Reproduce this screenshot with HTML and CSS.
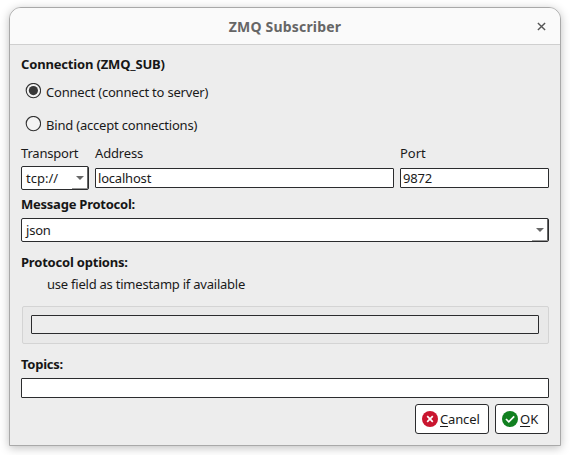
FILE: index.html
```html
<!DOCTYPE html>
<html lang="en">
<head>
<meta charset="utf-8">
<title>ZMQ Subscriber</title>
<link rel="stylesheet" href="styles.css">
</head>
<body>
<main class="window">
  <header class="titlebar">
    <h1><span class="t title">ZMQ Subscriber</span></h1>
    <svg class="close" width="9" height="9" viewBox="0 0 9 9"><path d="M.9.9l7.2 7.2M8.1.9L.9 8.1" stroke="#555" stroke-width="1.4"/></svg>
  </header>
  <form class="content">
    <div class="heading h-connection"><span class="t connection">Connection (ZMQ_SUB)</span></div>
    <div class="radio">
      <svg width="16" height="16" viewBox="0 0 16 16"><circle cx="8.4" cy="7.6" r="7.2" fill="#f4f4f4" stroke="#333" stroke-width="1.1"/><circle cx="8.4" cy="7.6" r="4.6" fill="#383838"/></svg>
      <span class="t connect">Connect (connect to server)</span>
    </div>
    <div class="radio">
      <svg width="16" height="16" viewBox="0 0 16 16"><circle cx="8.4" cy="7.6" r="7.2" fill="#f4f4f4" stroke="#333" stroke-width="1.1"/></svg>
      <span class="t bind">Bind (accept connections)</span>
    </div>
    <div class="endpoint labels">
      <span><span class="t transport">Transport</span></span><span><span class="t address">Address</span></span><span><span class="t port">Port</span></span>
    </div>
    <div class="endpoint fields">
      <div class="combo"><span class="t tcp">tcp://</span><span class="drop"><svg width="8" height="4" viewBox="0 0 8 4"><path d="M0 0h8L4 4z" fill="#686868"/></svg></span></div>
      <div class="input"><span class="t localhost">localhost</span></div>
      <div class="input"><span class="t number">9872</span></div>
    </div>
    <div class="heading h-message"><span class="t message">Message Protocol:</span></div>
    <div class="combo"><span class="t json">json</span><span class="drop"><svg width="8" height="4" viewBox="0 0 8 4"><path d="M0 0h8L4 4z" fill="#686868"/></svg></span></div>
    <div class="heading h-options"><span class="t options">Protocol options:</span></div>
    <div class="option"><span class="t usefield">use field as timestamp if available</span></div>
    <div class="frame"><div class="disabled"></div></div>
    <div class="heading h-topics"><span class="t topics">Topics:</span></div>
    <div class="input"></div>
    <div class="actions">
      <div class="button">
        <svg width="16" height="16" viewBox="0 0 16 16"><circle cx="8" cy="8" r="8" fill="#c9152f"/><path d="M5.2 5.2l5.6 5.6M10.8 5.2l-5.6 5.6" stroke="#fff" stroke-width="1.7"/></svg>
        <span class="t cancel"><span class="key">C</span>ancel</span>
      </div>
      <div class="button">
        <svg width="16" height="16" viewBox="0 0 16 16"><circle cx="8" cy="8" r="8" fill="#118020"/><path d="M4 8l2.8 2.8L12.2 5.4" fill="none" stroke="#fff" stroke-width="1.7"/></svg>
        <span class="t ok"><span class="key">O</span>K</span>
      </div>
    </div>
  </form>
</main>
</body>
</html>
```
FILE: styles.css
```css
* { box-sizing: border-box; }
body {
  margin: 0;
  padding: 7px 9px 9px;
  height: 455px;
  overflow: hidden;
  background: #fff;
  color: #1a1a1a;
  font: 13px/16px "Noto Sans", sans-serif;
}
svg { display: block; flex: none; }
.t { white-space: nowrap; letter-spacing: -.2px; }
.title { letter-spacing: .2px; }
.connection { letter-spacing: -.17px; }
.message { letter-spacing: -.24px; }
.usefield { letter-spacing: -.23px; }
.topics { letter-spacing: -.25px; }
.address, .cancel { letter-spacing: -.15px; }
.tcp, .port, .ok { letter-spacing: 0; }
.window {
  width: 552px;
  height: 439px;
  border: 1px solid #a9a9a9;
  border-radius: 12px 12px 0 0;
  background: #ededed;
  box-shadow: 0 2px 10px rgba(0, 0, 0, .25);
}
.titlebar {
  display: grid;
  grid-template-columns: 1fr auto 1fr;
  align-items: center;
  height: 37px;
  border-bottom: 1px solid #cfcfcf;
  border-radius: 11px 11px 0 0;
  background: #fafafa;
}
h1 {
  grid-column: 2;
  margin: 2px 0 0;
  font-size: 14px;
  line-height: 18px;
  font-weight: 700;
  color: #666;
}
.close { justify-self: end; margin-right: 14px; }
.content { display: flex; flex-direction: column; padding: 10px 11px 0; }
.heading { display: flex; align-items: center; font-weight: 700; color: #161616; }
.h-connection { height: 17px; margin-bottom: 2px; }
.h-message { height: 28px; }
.h-options { height: 39px; }
.h-topics { height: 37px; padding-top: 2px; margin-bottom: -3px; }
.radio { display: flex; align-items: center; gap: 5px; height: 33px; padding-left: 4px; }
.radio .t { padding-top: 2px; }
.endpoint { display: grid; grid-template-columns: 68px 299px 149px; column-gap: 6px; align-items: center; }
.labels { height: 26px; }
.fields { height: 24px; }
.combo {
  display: flex;
  justify-content: space-between;
  height: 24px;
  padding-left: 4px;
  border: 1px solid #2b2c2e;
  border-radius: 2px;
  background: #fff;
  line-height: 22px;
}
.drop {
  display: flex;
  align-items: center;
  justify-content: center;
  width: 16px;
  padding-top: 1px;
  border-right: 1px solid #666;
  border-bottom: 1px solid #999;
}
.input {
  height: 20px;
  padding-left: 2px;
  border: 1px solid #2b2c2e;
  border-radius: 1px;
  background: #fff;
  line-height: 18px;
}
.option { height: 25px; padding: 0 0 0 26px; line-height: 16px; margin-top: -5px; }
.frame {
  height: 38px;
  margin: 5px 0 0 1px;
  padding: 8px 9px 8px 8px;
  border: 1px solid #d4d4d4;
  border-radius: 2px;
  background: #e9e9e9;
}
.disabled { height: 19px; border: 1px solid #2b2c2e; border-radius: 1px; background: #ededed; }
.actions { display: flex; justify-content: flex-end; gap: 6px; margin-top: 6px; }
.button {
  display: flex;
  align-items: center;
  gap: 2px;
  width: 74px;
  height: 30px;
  padding-left: 6px;
  border: 1px solid #2b2c2e;
  border-radius: 3px;
  background: #fff;
}
.button + .button { width: 54px; }
.key { text-decoration: underline 1px; text-underline-offset: 2px; text-decoration-skip-ink: none; }
```
